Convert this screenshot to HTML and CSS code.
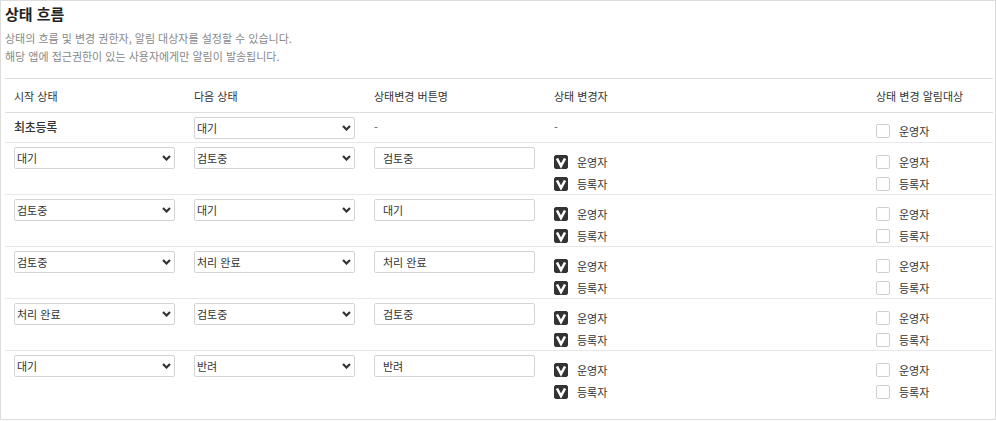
FILE: index.html
```html
<!DOCTYPE html>
<html lang="ko">
<head>
<meta charset="utf-8">
<link rel="stylesheet" href="styles.css">
</head>
<body>
<div class="panel">
  <h2 class="title">상태 흐름</h2>
  <p class="desc">상태의 흐름 및 변경 권한자, 알림 대상자를 설정할 수 있습니다.<br>해당 앱에 접근권한이 있는 사용자에게만 알림이 발송됩니다.</p>
  <div class="table">
    <div class="row head">
      <div class="cell">시작 상태</div>
      <div class="cell">다음 상태</div>
      <div class="cell">상태변경 버튼명</div>
      <div class="cell">상태 변경자</div>
      <div class="cell">상태 변경 알림대상</div>
    </div>

    <div class="row first">
      <div class="cell strong">최초등록</div>
      <div class="cell"><div class="sel"><select><option>대기</option></select><svg class="chev" viewBox="0 0 9 6"><path d="M1 1l3.5 3.5L8 1"/></svg></div></div>
      <div class="cell dash">-</div>
      <div class="cell dash">-</div>
      <div class="cell checks">
        <label class="chk"><span class="box"></span>운영자</label>
      </div>
    </div>

    <div class="row">
      <div class="cell"><div class="sel"><select><option>대기</option></select><svg class="chev" viewBox="0 0 9 6"><path d="M1 1l3.5 3.5L8 1"/></svg></div></div>
      <div class="cell"><div class="sel"><select><option>검토중</option></select><svg class="chev" viewBox="0 0 9 6"><path d="M1 1l3.5 3.5L8 1"/></svg></div></div>
      <div class="cell"><input class="inp" type="text" value="검토중"></div>
      <div class="cell checks">
        <label class="chk"><span class="box on"><svg viewBox="0 0 14 14"><path d="M3 3.5l4 7.5 4-7.5"/></svg></span>운영자</label>
        <label class="chk"><span class="box on"><svg viewBox="0 0 14 14"><path d="M3 3.5l4 7.5 4-7.5"/></svg></span>등록자</label>
      </div>
      <div class="cell checks">
        <label class="chk"><span class="box"></span>운영자</label>
        <label class="chk"><span class="box"></span>등록자</label>
      </div>
    </div>

    <div class="row">
      <div class="cell"><div class="sel"><select><option>검토중</option></select><svg class="chev" viewBox="0 0 9 6"><path d="M1 1l3.5 3.5L8 1"/></svg></div></div>
      <div class="cell"><div class="sel"><select><option>대기</option></select><svg class="chev" viewBox="0 0 9 6"><path d="M1 1l3.5 3.5L8 1"/></svg></div></div>
      <div class="cell"><input class="inp" type="text" value="대기"></div>
      <div class="cell checks">
        <label class="chk"><span class="box on"><svg viewBox="0 0 14 14"><path d="M3 3.5l4 7.5 4-7.5"/></svg></span>운영자</label>
        <label class="chk"><span class="box on"><svg viewBox="0 0 14 14"><path d="M3 3.5l4 7.5 4-7.5"/></svg></span>등록자</label>
      </div>
      <div class="cell checks">
        <label class="chk"><span class="box"></span>운영자</label>
        <label class="chk"><span class="box"></span>등록자</label>
      </div>
    </div>

    <div class="row">
      <div class="cell"><div class="sel"><select><option>검토중</option></select><svg class="chev" viewBox="0 0 9 6"><path d="M1 1l3.5 3.5L8 1"/></svg></div></div>
      <div class="cell"><div class="sel"><select><option>처리 완료</option></select><svg class="chev" viewBox="0 0 9 6"><path d="M1 1l3.5 3.5L8 1"/></svg></div></div>
      <div class="cell"><input class="inp" type="text" value="처리 완료"></div>
      <div class="cell checks">
        <label class="chk"><span class="box on"><svg viewBox="0 0 14 14"><path d="M3 3.5l4 7.5 4-7.5"/></svg></span>운영자</label>
        <label class="chk"><span class="box on"><svg viewBox="0 0 14 14"><path d="M3 3.5l4 7.5 4-7.5"/></svg></span>등록자</label>
      </div>
      <div class="cell checks">
        <label class="chk"><span class="box"></span>운영자</label>
        <label class="chk"><span class="box"></span>등록자</label>
      </div>
    </div>

    <div class="row">
      <div class="cell"><div class="sel"><select><option>처리 완료</option></select><svg class="chev" viewBox="0 0 9 6"><path d="M1 1l3.5 3.5L8 1"/></svg></div></div>
      <div class="cell"><div class="sel"><select><option>검토중</option></select><svg class="chev" viewBox="0 0 9 6"><path d="M1 1l3.5 3.5L8 1"/></svg></div></div>
      <div class="cell"><input class="inp" type="text" value="검토중"></div>
      <div class="cell checks">
        <label class="chk"><span class="box on"><svg viewBox="0 0 14 14"><path d="M3 3.5l4 7.5 4-7.5"/></svg></span>운영자</label>
        <label class="chk"><span class="box on"><svg viewBox="0 0 14 14"><path d="M3 3.5l4 7.5 4-7.5"/></svg></span>등록자</label>
      </div>
      <div class="cell checks">
        <label class="chk"><span class="box"></span>운영자</label>
        <label class="chk"><span class="box"></span>등록자</label>
      </div>
    </div>

    <div class="row last">
      <div class="cell"><div class="sel"><select><option>대기</option></select><svg class="chev" viewBox="0 0 9 6"><path d="M1 1l3.5 3.5L8 1"/></svg></div></div>
      <div class="cell"><div class="sel"><select><option>반려</option></select><svg class="chev" viewBox="0 0 9 6"><path d="M1 1l3.5 3.5L8 1"/></svg></div></div>
      <div class="cell"><input class="inp" type="text" value="반려"></div>
      <div class="cell checks">
        <label class="chk"><span class="box on"><svg viewBox="0 0 14 14"><path d="M3 3.5l4 7.5 4-7.5"/></svg></span>운영자</label>
        <label class="chk"><span class="box on"><svg viewBox="0 0 14 14"><path d="M3 3.5l4 7.5 4-7.5"/></svg></span>등록자</label>
      </div>
      <div class="cell checks">
        <label class="chk"><span class="box"></span>운영자</label>
        <label class="chk"><span class="box"></span>등록자</label>
      </div>
    </div>
  </div>
</div>
</body>
</html>
```

FILE: styles.css
```css
* { box-sizing: border-box; }
html, body { margin: 0; padding: 0; background: #fff; }
body {
  font-family: "Noto Sans CJK KR", "Noto Sans", sans-serif;
  font-size: 11px;
  letter-spacing: 0;
  color: #333;
}
.panel {
  width: 996px;
  height: 420px;
  border: 1px solid #dcdcdc;
  padding: 3px 2px 0 4px;
}
.title {
  margin: 0;
  font-size: 15px;
  line-height: 20px;
  font-weight: 700;
  color: #222;
}
.desc {
  margin: 5px 0 13px;
  font-size: 11px;
  line-height: 18px;
  color: #888;
}
.table {
  width: 988px;
  border-top: 1px solid #dcdcdc;
}
.row {
  display: grid;
  grid-template-columns: 180px 180px 180px 322px 126px;
  height: 52px;
  border-bottom: 1px solid #e8e8e8;
}
.row.head {
  height: 34px;
  border-bottom-color: #dcdcdc;
  align-items: center;
}
.row.first { height: 30px; }
.row.last { border-bottom: 0; height: 51px; }
.cell {
  padding: 4px 10px 0 9px;
}
.head .cell { padding-top: 0; }
.strong {
  font-size: 12px;
  font-weight: 500;
  color: #333;
  line-height: 21px;
  letter-spacing: -0.3px;
  padding-top: 3px;
}
.dash {
  line-height: 21px;
  color: #555;
}
.sel {
  position: relative;
  width: 161px;
}
.sel select {
  display: block;
  width: 161px;
  height: 22px;
  margin: 0;
  padding: 0 20px 0 2px;
  border: 1px solid #d4d4d4;
  border-radius: 2px;
  background: #fff;
  font-family: inherit;
  font-size: 11px;
  color: #333;
  -webkit-appearance: none;
  appearance: none;
  outline: none;
}
.chev {
  position: absolute;
  right: 4px;
  top: 8px;
  width: 9px;
  height: 6px;
  fill: none;
  stroke: #333;
  stroke-width: 2.2;
  pointer-events: none;
}
.inp {
  display: block;
  width: 161px;
  height: 22px;
  margin: 0;
  padding: 0 8px;
  border: 1px solid #d4d4d4;
  border-radius: 2px;
  font-family: inherit;
  font-size: 11px;
  color: #333;
  outline: none;
}
.checks {
  display: flex;
  flex-direction: column;
  gap: 8px;
  padding-top: 12px;
}
.first .checks { padding-top: 11px; }
.chk {
  display: flex;
  align-items: center;
  gap: 9px;
  height: 14px;
  line-height: 14px;
}
.box {
  position: relative;
  width: 14px;
  height: 14px;
  flex: none;
  border: 1px solid #cfcfcf;
  border-radius: 2px;
  background: #fff;
}
.box.on {
  background: #333;
  border-color: #333;
}
.box svg {
  display: block;
  width: 14px;
  height: 14px;
  margin: -1px;
  fill: none;
  stroke: #fff;
  stroke-width: 2.6;
  stroke-linejoin: miter;
}
```
